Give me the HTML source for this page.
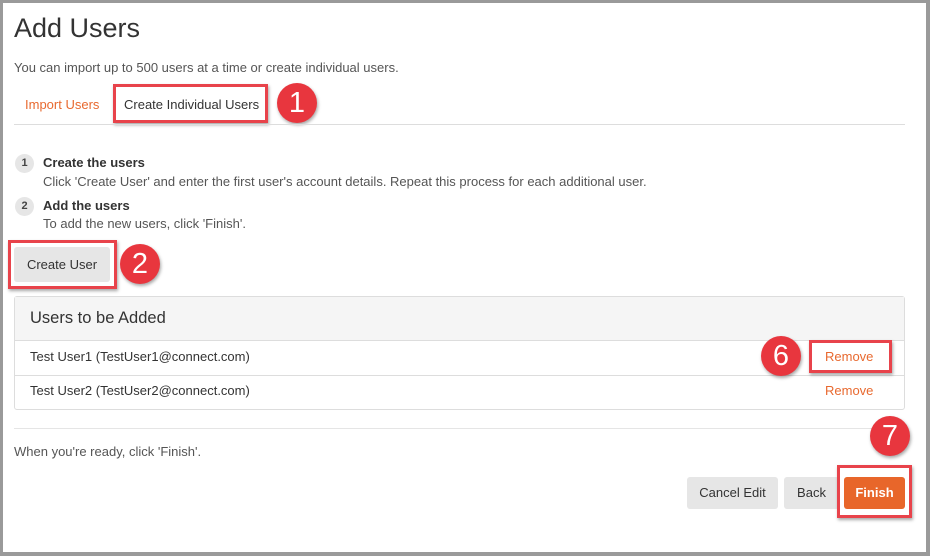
<!DOCTYPE html>
<html><head><meta charset="utf-8"><style>
*{box-sizing:border-box;margin:0;padding:0}
body{width:930px;height:556px;background:#fff;font-family:"Liberation Sans",Arial,sans-serif;color:#333;position:relative;overflow:hidden}
.frame{position:absolute;left:0;top:0;width:930px;height:556px;border:3px solid #9a9a9a;border-right-width:4px;border-bottom-width:4px}
.a{position:absolute;white-space:nowrap}
.rb{position:absolute;border:3px solid #e8434b;box-shadow:1px 2px 3px rgba(0,0,0,.35)}
.c{position:absolute;width:40px;height:40px;border-radius:50%;background:#e8363e;color:#fff;font-size:29px;text-align:center;line-height:40px;box-shadow:1px 2px 3px rgba(0,0,0,.35)}
.n{position:absolute;width:19px;height:19px;border-radius:50%;background:#e6e6e6;font-size:11px;font-weight:bold;text-align:center;line-height:19px;color:#444}
.btn{position:absolute;background:#e6e6e6;border-radius:3px;font-size:13px;text-align:center;color:#333}
.or{color:#e8692f}
</style></head><body>
<div class="frame"></div>
<div class="a" style="left:14px;top:13px;font-size:27px;color:#333">Add Users</div>
<div class="a" style="left:14px;top:60px;font-size:13px;color:#555">You can import up to 500 users at a time or create individual users.</div>
<div class="a or" style="left:25px;top:97px;font-size:13px">Import Users</div>
<div class="a" style="left:124px;top:97px;font-size:13px">Create Individual Users</div>
<div class="rb" style="left:113px;top:84px;width:155px;height:39px"></div>
<div class="c" style="left:277px;top:83px">1</div>
<div class="a" style="left:14px;top:124px;width:891px;height:1px;background:#ddd"></div>
<div class="n" style="left:15px;top:154px">1</div>
<div class="a" style="left:43px;top:155px;font-size:13px;font-weight:bold">Create the users</div>
<div class="a" style="left:43px;top:174px;font-size:13px;color:#555">Click 'Create User' and enter the first user's account details. Repeat this process for each additional user.</div>
<div class="n" style="left:15px;top:197px">2</div>
<div class="a" style="left:43px;top:198px;font-size:13px;font-weight:bold">Add the users</div>
<div class="a" style="left:43px;top:216px;font-size:13px;color:#555">To add the new users, click 'Finish'.</div>
<div class="btn" style="left:14px;top:247px;width:96px;height:35px;line-height:35px">Create User</div>
<div class="rb" style="left:8px;top:240px;width:109px;height:49px"></div>
<div class="c" style="left:120px;top:244px">2</div>
<div class="a" style="left:14px;top:296px;width:891px;height:114px;border:1px solid #ddd;border-radius:3px"></div>
<div class="a" style="left:15px;top:297px;width:889px;height:44px;background:#f5f5f5;border-bottom:1px solid #ddd"></div>
<div class="a" style="left:30px;top:309px;font-size:16.5px">Users to be Added</div>
<div class="a" style="left:30px;top:349px;font-size:13px">Test User1 (TestUser1@connect.com)</div>
<div class="a" style="left:15px;top:375px;width:889px;height:1px;background:#ddd"></div>
<div class="a" style="left:30px;top:383px;font-size:13px">Test User2 (TestUser2@connect.com)</div>
<div class="a or" style="left:825px;top:349px;font-size:13px">Remove</div>
<div class="a or" style="left:825px;top:383px;font-size:13px">Remove</div>
<div class="rb" style="left:809px;top:340px;width:83px;height:33px"></div>
<div class="c" style="left:761px;top:336px">6</div>
<div class="a" style="left:14px;top:428px;width:891px;height:1px;background:#e5e5e5"></div>
<div class="a" style="left:14px;top:444px;font-size:13px;color:#555">When you're ready, click 'Finish'.</div>
<div class="btn" style="left:687px;top:477px;width:91px;height:32px;line-height:32px">Cancel Edit</div>
<div class="btn" style="left:784px;top:477px;width:55px;height:32px;line-height:32px">Back</div>
<div class="btn" style="left:844px;top:477px;width:61px;height:32px;line-height:32px;background:#e8662a;color:#fff;font-weight:bold">Finish</div>
<div class="rb" style="left:837px;top:465px;width:75px;height:53px"></div>
<div class="c" style="left:870px;top:416px">7</div>
</body></html>
